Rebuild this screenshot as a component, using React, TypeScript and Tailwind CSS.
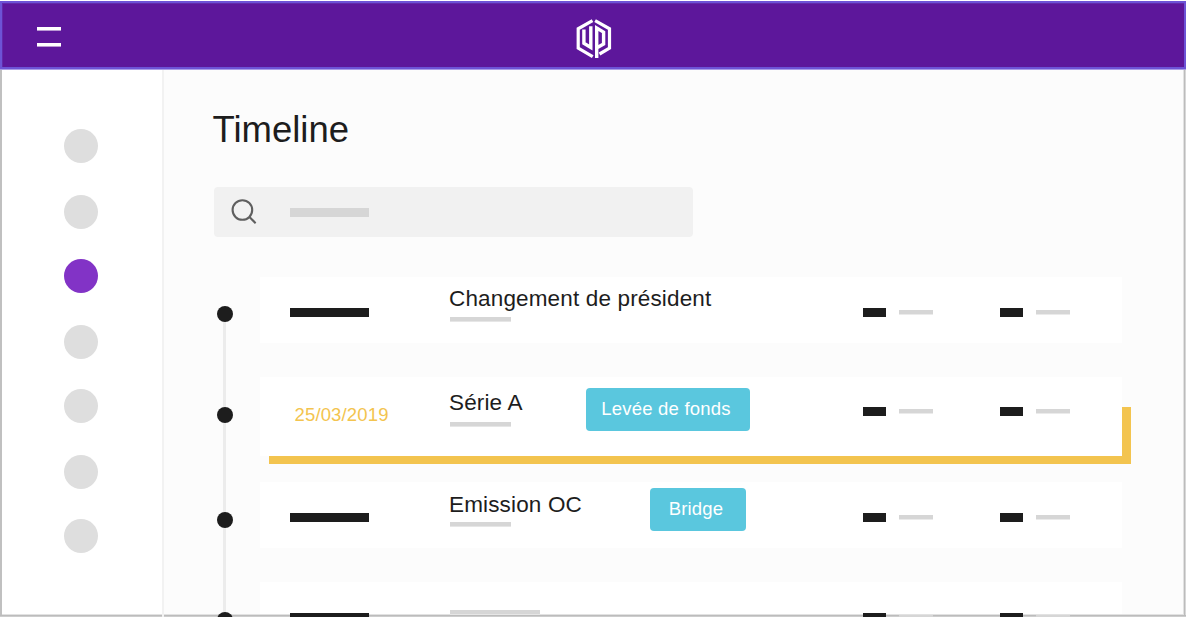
type Entry = {
  id: string;
  gap: string;
  height: string;
  dot: string;
  date?: string;
  title?: string;
  titleTop: string;
  subWidth: string;
  barTop: string;
  dateTop: string;
  tag?: string;
  tagClass?: string;
  highlighted?: boolean;
};

const entries: Entry[] = [
  {
    id: "president",
    gap: "mt-[40px]",
    height: "h-[66px]",
    dot: "mt-[29px]",
    title: "Changement de président",
    titleTop: "pt-[9px] gap-[5px]",
    subWidth: "w-[61px]",
    barTop: "pt-[31px]",
    dateTop: "pt-[31px]",
  },
  {
    id: "serie-a",
    gap: "mt-[34px]",
    height: "h-[79px]",
    dot: "mt-[29.5px]",
    date: "25/03/2019",
    title: "Série A",
    titleTop: "pt-[13px] gap-[6px]",
    subWidth: "w-[61px]",
    barTop: "pt-[30px]",
    dateTop: "pt-[27px]",
    tag: "Levée de fonds",
    tagClass: "mt-[11px] ml-[12px] w-[164px]",
    highlighted: true,
  },
  {
    id: "emission",
    gap: "mt-[26px]",
    height: "h-[66px]",
    dot: "mt-[29.5px]",
    title: "Emission OC",
    titleTop: "pt-[10px] gap-[4px]",
    subWidth: "w-[61px]",
    barTop: "pt-[31px]",
    dateTop: "pt-[31px]",
    tag: "Bridge",
    tagClass: "mt-[6px] ml-[76px] w-[96px]",
  },
  {
    id: "next",
    gap: "mt-[34px]",
    height: "h-[32px]",
    dot: "mt-[29.5px]",
    titleTop: "pt-[28px]",
    subWidth: "w-[90px]",
    barTop: "pt-[31px]",
    dateTop: "pt-[31px]",
  },
];

const navItems = [
  "mt-[59px]",
  "mt-[32px]",
  "mt-[30px]",
  "mt-[32px]",
  "mt-[30px]",
  "mt-[32px]",
  "mt-[30px]",
];

function Logo() {
  return (
    <svg width="36" height="40" viewBox="0 0 36 40" fill="none" stroke="#fff" strokeWidth="3.2">
      <path d="M16.5 1.7 2.2 9.8v19.4l14.5 8.4" />
      <path d="M19.1 1.7 33.5 9.8v19.4l-10 5.8" />
      <path strokeWidth="3.4" d="M7.9 10.6v13.6l6.9 4.2V7.2" />
      <path strokeWidth="3.4" d="M20.7 39V9l6.9 4.1v11.8l-6.2 3.6" />
    </svg>
  );
}

function Header() {
  return (
    <header className="flex h-[69px] shrink-0 items-start bg-[#5d179b] shadow-[inset_0_-1px_#a99be6,inset_0_-3px_#6d53d6,inset_2px_2px_#6d53d6,inset_-2px_0_#6d53d6,inset_3px_3px_#6229aa]">
      <div className="mt-[26px] ml-[37px] flex w-[24px] flex-col gap-[12px]">
        <span className="h-[4px] border-b border-[#b999d3] bg-white" />
        <span className="h-[4px] border-b border-[#b999d3] bg-white" />
      </div>
      <div className="mt-[18px] ml-[515px]">
        <Logo />
      </div>
    </header>
  );
}

function Sidebar() {
  return (
    <nav className="flex w-[160px] shrink-0 flex-col items-center bg-white pr-[2px]">
      {navItems.map((spacing, i) => (
        <span
          key={i}
          className={`${spacing} size-[34px] shrink-0 rounded-full ${i === 2 ? "bg-[#8233c6]" : "bg-[#dedede]"}`}
        />
      ))}
    </nav>
  );
}

function Search() {
  return (
    <div className="mt-[37px] ml-[50px] flex h-[50px] w-[479px] items-center rounded-[4px] bg-[#f1f1f1]">
      <svg className="ml-[16px]" width="28" height="28" viewBox="0 0 28 28" fill="none" stroke="#5f5f5f" strokeWidth="2.1">
        <circle cx="12.4" cy="12" r="9.8" />
        <path d="m19.2 18.8 6.4 6.4" />
      </svg>
      <span className="ml-[32px] h-[9px] w-[79px] bg-[#d6d6d6]" />
    </div>
  );
}

function Metric() {
  return (
    <div className="flex h-[9px] w-[70px] shrink-0 items-start gap-[13px]">
      <span className="h-[9px] w-[23px] bg-[#1d1d1d]" />
      <span className="mt-[2px] h-[5px] w-[34px] border-b border-[#ebebeb] bg-[#d6d6d6]" />
    </div>
  );
}

function TimelineRow({ entry, last }: { entry: Entry; last: boolean }) {
  return (
    <li className={`flex ${entry.gap}`}>
      <div className="relative ml-[52.5px] w-[43.5px] shrink-0">
        {!last && <span className="absolute top-[37px] left-[6.5px] h-[106px] w-[3px] bg-[#ececec]" />}
        <span className={`relative block size-[16px] rounded-full bg-[#1d1d1d] ${entry.dot}`} />
      </div>
      <article className={`relative flex w-[862px] shrink-0 items-start bg-white ${entry.height}`}>
        {entry.highlighted && (
          <span className="absolute top-[30px] -right-[9px] -bottom-[8px] left-[9px] border-r-[9px] border-b-[8px] border-[#f3c44f]" />
        )}
        <div className={`w-[190px] shrink-0 pl-[30px] ${entry.dateTop}`}>
          {entry.date ? (
            <time className="ml-[4.5px] block text-[18.5px] leading-[22px] tracking-[0.15px] text-[#f3c44f]">{entry.date}</time>
          ) : (
            <span className="block h-[9px] w-[79px] bg-[#1d1d1d]" />
          )}
        </div>
        <div className="flex w-[413px] shrink-0">
          <div className={`flex w-[124px] shrink-0 flex-col ${entry.titleTop}`}>
            {entry.title && (
              <h2 className="-ml-[1px] text-[22.5px] leading-[26px] tracking-[0.15px] whitespace-nowrap">{entry.title}</h2>
            )}
            <span className={`h-[5px] border-b border-[#e6e6e6] bg-[#d6d6d6] ${entry.subWidth}`} />
          </div>
          {entry.tag && (
            <span
              className={`flex h-[43px] items-center justify-center rounded-[4px] bg-[#5ac7de] pr-[4px] pb-[2px] text-[18.5px] tracking-[0.2px] text-white ${entry.tagClass}`}
            >
              {entry.tag}
            </span>
          )}
        </div>
        <div className={`flex gap-[67px] ${entry.barTop}`}>
          <Metric />
          <Metric />
        </div>
      </article>
    </li>
  );
}

export default function App() {
  return (
    <div className="h-[618px] w-[1186px] overflow-hidden bg-white pt-px font-['Liberation_Sans',Arial,sans-serif] text-[#1d1d1d]">
      <div className="flex h-[616px] flex-col overflow-hidden">
        <Header />
        <div className="flex h-[547px] shrink-0 bg-[#fcfcfc] pr-[3px] pb-[3px] pl-[2px] shadow-[inset_0_-1px_#cdcdcd,inset_0_-2px_#bcbcbc,inset_2px_0_#c0c0c0,inset_-1px_0_#d8d8d8,inset_-2px_0_#bcbcbc,inset_-3px_-3px_#e2e2e2]">
          <Sidebar />
          <span className="-mb-[3px] w-[2px] shrink-0 bg-[#f2f2f2]" />
          <main className="h-[544px] w-[1019px] shrink-0">
            <h1 className="mt-[39px] ml-[48.5px] text-[36.5px] leading-[41px]">Timeline</h1>
            <Search />
            <ol>
              {entries.map((entry, i) => (
                <TimelineRow key={entry.id} entry={entry} last={i === entries.length - 1} />
              ))}
            </ol>
          </main>
        </div>
      </div>
    </div>
  );
}
